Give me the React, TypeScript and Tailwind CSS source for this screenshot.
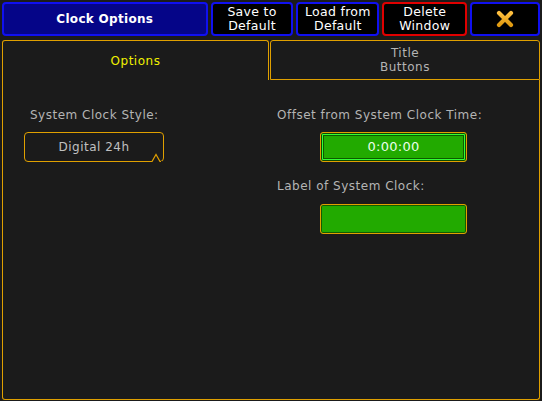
const font = { fontFamily: '"DejaVu Sans", "Liberation Sans", sans-serif' };

const TopButton = ({ lines, width, danger }: { lines: string[]; width: string; danger?: boolean }) => (
  <button
    className={`${width} h-[34px] rounded-[4px] border-2 ${danger ? "border-[#e00000]" : "border-[#1010f0]"} bg-black flex flex-col items-center justify-center text-[12.5px] leading-[14px] tracking-[0.3px] text-white`}
  >
    {lines.map((l) => (
      <span key={l}>{l}</span>
    ))}
  </button>
);

const CloseIcon = () => (
  <svg width="20" height="18" viewBox="0 0 20 18">
    <defs>
      <linearGradient id="xg" x1="0" y1="0" x2="0" y2="1">
        <stop offset="0" stopColor="#ffc040" />
        <stop offset="1" stopColor="#e09a10" />
      </linearGradient>
    </defs>
    <path d="M4 3 L16 15 M16 3 L4 15" stroke="url(#xg)" strokeWidth="4.2" strokeLinecap="round" />
  </svg>
);

export default function App() {
  return (
    <div className="w-[542px] h-[401px] bg-[#1b1b1b] flex flex-col overflow-hidden select-none" style={font}>
      {/* title bar */}
      <div className="flex gap-[3px] pt-[2px] px-[2px]">
        <div className="w-[206px] h-[34px] rounded-[4px] border-2 border-[#1010f0] bg-[#050588] flex items-center justify-center text-white font-bold text-[12px] tracking-[0.3px]">
          Clock Options
        </div>
        <TopButton lines={["Save to", "Default"]} width="w-[83px]" />
        <TopButton lines={["Load from", "Default"]} width="w-[83px]" />
        <TopButton lines={["Delete", "Window"]} width="w-[85px]" danger />
        <button className="w-[70px] h-[34px] rounded-[4px] border-2 border-[#1010f0] bg-black flex items-center justify-center">
          <CloseIcon />
        </button>
      </div>

      {/* tabs */}
      <div className="flex mt-[4px] px-[2px] h-[40px] tracking-[0.5px]">
        <div className="w-[267px] h-full rounded-t-[3px] border border-b-0 border-[#e0a000] flex items-center justify-center text-[12px] text-[#f0f000]">
          Options
        </div>
        <div className="ml-[1px] flex-1 h-full rounded-t-[3px] border border-[#e0a000] flex flex-col items-center justify-center text-[12px] leading-[14px] text-[#b4b4b4]">
          <span>Title</span>
          <span>Buttons</span>
        </div>
      </div>

      {/* panel body */}
      <div className="mx-[2px] mb-[1px] flex-1 rounded-b-[3px] border border-t-0 border-[#e0a000] flex pt-[28px] text-[12px] leading-[14px] tracking-[0.5px] text-[#b4b4b4]">
        <div className="w-[274px] pl-[21px] flex flex-col">
          <span className="pl-[6px]">System Clock Style:</span>
          <div className="relative mt-[10px] w-[140px] h-[30px] rounded-[4px] border border-[#e0a000] flex items-center justify-center text-[#c0c0c0]">
            Digital 24h
            <svg className="absolute right-[1px] bottom-[-1px]" width="12" height="10" viewBox="0 0 12 10">
              <path d="M0 10 L12 10" stroke="#1b1b1b" strokeWidth="2" />
              <path d="M0 9.5 L2 9.5 L6 2.5 L10 9.5 L11 9.5" fill="#1b1b1b" stroke="#e0a000" strokeWidth="1.2" />
            </svg>
          </div>
        </div>
        <div className="flex flex-col">
          <span>Offset from System Clock Time:</span>
          <div className="mt-[10px] ml-[43px] w-[147px] h-[30px] rounded-[3px] border border-[#e0a000] bg-[#22aa00] shadow-[inset_0_0_0_1px_#0d4a00,inset_0_0_0_2px_#33ff33,inset_0_0_0_3px_#0d5a00] flex items-center justify-center text-[13px] tracking-[0.3px] text-[#eaffea]">
            0:00:00
          </div>
          <span className="mt-[17px]">Label of System Clock:</span>
          <div className="mt-[11px] ml-[43px] w-[147px] h-[30px] rounded-[3px] border border-[#e0a000] bg-[#22aa00] shadow-[inset_0_0_0_1px_#145c00]" />
        </div>
      </div>
    </div>
  );
}
